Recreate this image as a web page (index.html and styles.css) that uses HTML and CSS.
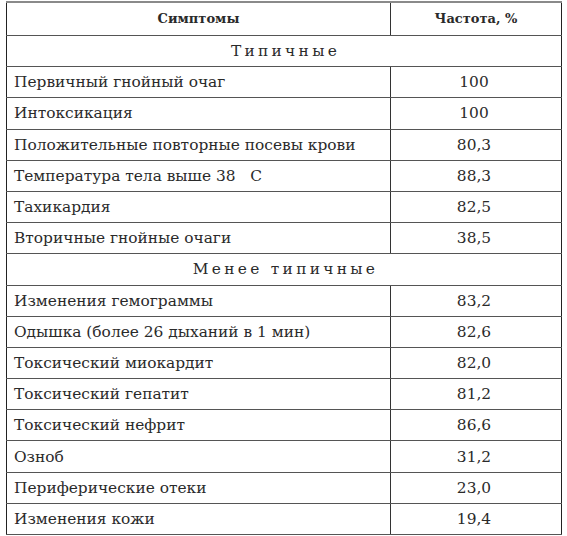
FILE: index.html
```html
<!DOCTYPE html>
<html lang="ru">
<head>
<meta charset="utf-8">
<link rel="stylesheet" href="styles.css">
</head>
<body>
<table class="symptoms">
  <thead>
    <tr class="head"><th class="c1">Симптомы</th><th class="c2">Частота, %</th></tr>
  </thead>
  <tbody>
    <tr class="group"><td colspan="2">Типичные</td></tr>
    <tr><td class="c1">Первичный гнойный очаг</td><td class="c2">100</td></tr>
    <tr><td class="c1">Интоксикация</td><td class="c2">100</td></tr>
    <tr><td class="c1">Положительные повторные посевы крови</td><td class="c2">80,3</td></tr>
    <tr><td class="c1">Температура тела выше 38&nbsp;&nbsp; С</td><td class="c2">88,3</td></tr>
    <tr><td class="c1">Тахикардия</td><td class="c2">82,5</td></tr>
    <tr><td class="c1">Вторичные гнойные очаги</td><td class="c2">38,5</td></tr>
    <tr class="group"><td colspan="2">Менее типичные</td></tr>
    <tr><td class="c1">Изменения гемограммы</td><td class="c2">83,2</td></tr>
    <tr><td class="c1">Одышка (более 26 дыханий в 1 мин)</td><td class="c2">82,6</td></tr>
    <tr><td class="c1">Токсический миокардит</td><td class="c2">82,0</td></tr>
    <tr><td class="c1">Токсический гепатит</td><td class="c2">81,2</td></tr>
    <tr><td class="c1">Токсический нефрит</td><td class="c2">86,6</td></tr>
    <tr><td class="c1">Озноб</td><td class="c2">31,2</td></tr>
    <tr><td class="c1">Периферические отеки</td><td class="c2">23,0</td></tr>
    <tr><td class="c1">Изменения кожи</td><td class="c2">19,4</td></tr>
  </tbody>
</table>
</body>
</html>
```
FILE: styles.css
```css
html, body {
  margin: 0;
  padding: 0;
  background: #fff;
}
body {
  padding: 1px 0 0 6px;
  font-family: "DejaVu Serif", "Liberation Serif", serif;
  color: #2a2a2a;
}
.symptoms {
  border-collapse: collapse;
  width: 556px;
  table-layout: fixed;
  border-left: 1px solid #222;
  border-right: 1px solid #222;
  border-bottom: 1px solid #444;
}
.symptoms .c1 { width: 383px; }
.symptoms th, .symptoms td {
  padding: 0;
  border-bottom: 1px solid #555;
  height: 30.2px;
  font-size: 15.4px;
  line-height: 30px;
  white-space: nowrap;
}
.symptoms .head th {
  border-top: 2px solid #8a8a8a;
  height: 32px;
  font-size: 13px;
  font-weight: bold;
  text-align: center;
}
.symptoms th.c1, .symptoms td.c1 {
  border-right: 1px solid #333;
}
.symptoms td.c1 {
  text-align: left;
  padding-left: 7px;
}
.symptoms td.c2 {
  text-align: center;
  padding-right: 4px;
}
.symptoms .group td {
  text-align: center;
  letter-spacing: 3.3px;
  padding-left: 3px;
}
```
